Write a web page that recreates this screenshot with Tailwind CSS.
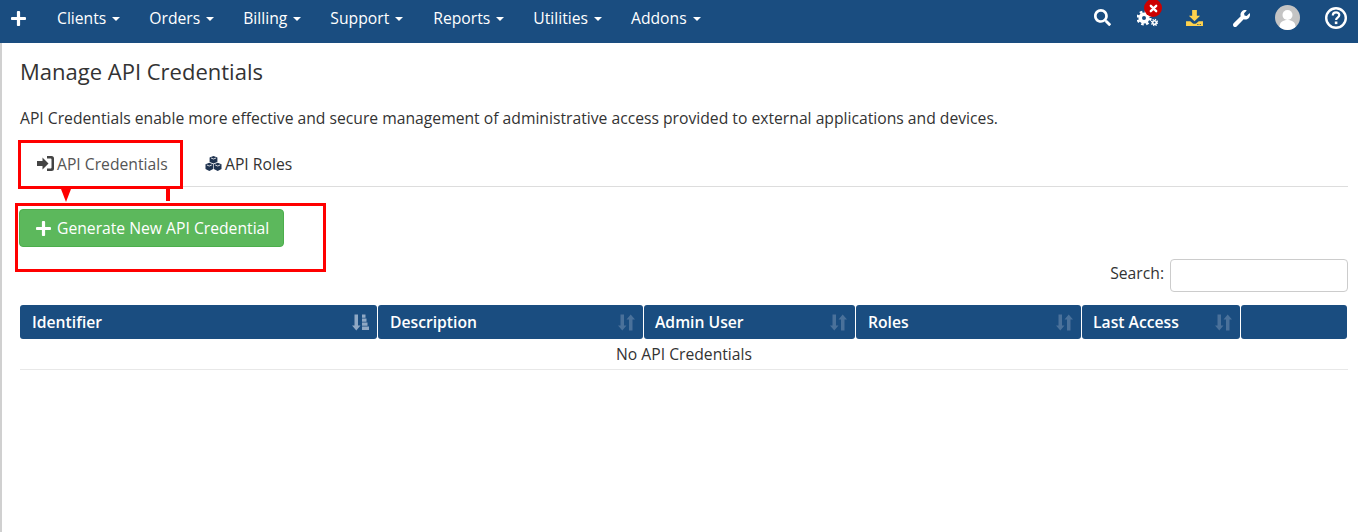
<!DOCTYPE html>
<html lang="en">
<head>
  <meta charset="UTF-8" />
  <title>Manage API Credentials</title>
  <script src="https://cdn.jsdelivr.net/npm/@tailwindcss/browser@4"></script>
</head>
<body class="bg-white font-['Open_Sans',sans-serif] text-[15.7px] leading-[24px] text-[#333] h-[532px] overflow-hidden relative">

  <!-- Top nav -->
  <nav class="h-[43px] bg-[#1a4d80] text-white flex items-center pl-[11px] pr-[11px] pb-[7px]">
    <svg class="w-[15px] h-[15px] mr-[31px] fill-white" viewBox="0 32 448 448"><path d="M416 208H272V64c0-17.67-14.33-32-32-32h-32c-17.67 0-32 14.33-32 32v144H32c-17.67 0-32 14.33-32 32v32c0 17.67 14.33 32 32 32h144v144c0 17.67 14.33 32 32 32h32c17.67 0 32-14.33 32-32V304h144c17.67 0 32-14.33 32-32v-32c0-17.67-14.33-32-32-32z"/></svg>
    <ul class="flex gap-[29px]">
      <li class="flex items-center gap-[6px]">Clients <span class="mt-[2px] border-x-[4px] border-x-transparent border-t-[4px] border-t-white"></span></li>
      <li class="flex items-center gap-[6px]">Orders <span class="mt-[2px] border-x-[4px] border-x-transparent border-t-[4px] border-t-white"></span></li>
      <li class="flex items-center gap-[6px]">Billing <span class="mt-[2px] border-x-[4px] border-x-transparent border-t-[4px] border-t-white"></span></li>
      <li class="flex items-center gap-[6px]">Support <span class="mt-[2px] border-x-[4px] border-x-transparent border-t-[4px] border-t-white"></span></li>
      <li class="flex items-center gap-[6px] ml-[1px]">Reports <span class="mt-[2px] border-x-[4px] border-x-transparent border-t-[4px] border-t-white"></span></li>
      <li class="flex items-center gap-[6px]">Utilities <span class="mt-[2px] border-x-[4px] border-x-transparent border-t-[4px] border-t-white"></span></li>
      <li class="flex items-center gap-[6px]">Addons <span class="mt-[2px] border-x-[4px] border-x-transparent border-t-[4px] border-t-white"></span></li>
    </ul>
    <div class="ml-auto flex items-center">
      <svg class="w-[17px] h-[17px] fill-white mr-[26px] -mt-[2px]" viewBox="0 0 512 512"><path d="M505 442.7L405.3 343c-4.5-4.5-10.6-7-17-7H372c27.6-35.3 44-79.7 44-128C416 93.1 322.9 0 208 0S0 93.1 0 208s93.1 208 208 208c48.3 0 92.7-16.4 128-44v16.3c0 6.4 2.5 12.5 7 17l99.7 99.7c9.4 9.4 24.6 9.4 33.9 0l28.3-28.3c9.4-9.4 9.4-24.6.1-34zM208 336c-70.7 0-128-57.2-128-128 0-70.7 57.2-128 128-128 70.7 0 128 57.2 128 128 0 70.7-57.2 128-128 128z"/></svg>
      <!-- cogs + alert badge -->
      <div class="relative w-[21px] h-[18px] mr-[28px]">
        <svg class="w-[21px] h-[18px]" viewBox="0 0 21 18">
          <circle cx="7" cy="9" r="3.800" fill="none" stroke="#fff" stroke-width="3.600"/>
          <circle cx="7" cy="9" r="6.400" fill="none" stroke="#fff" stroke-width="2.400" stroke-dasharray="2.600 2.426"/>
          <circle cx="17.500" cy="13.500" r="1.800" fill="none" stroke="#fff" stroke-width="1.600"/>
          <circle cx="17.500" cy="13.500" r="3.100" fill="none" stroke="#fff" stroke-width="1.200" stroke-dasharray="1.300 1.135"/>
        </svg>
        <span class="absolute -top-[10px] left-[7px] w-[18px] h-[18px] rounded-full bg-[#cc0000] flex items-center justify-center">
          <svg class="w-[9px] h-[9px]" viewBox="0 0 10 10"><path d="M2 2l6 6M8 2l-6 6" stroke="#fff" stroke-width="2.600" stroke-linecap="round"/></svg>
        </span>
      </div>
      <svg class="w-[17px] h-[16px] mr-[30px]" viewBox="0 0 18 17"><path d="M6.500 0h5v6h3.500L9 12 3 6h3.500z" fill="#ffd24d"/><path d="M0 12h4.500L7 14c1 .8 3 .8 4 0l2.500-2H18v5H0z" fill="#ffd24d"/><path d="M12 15h1.200v1H12zM14.500 15h1.200v1h-1.200z" fill="#1a4d80"/></svg>
      <svg class="w-[17px] h-[17px] fill-white mr-[25px]" viewBox="0 0 512 512"><path d="M507.730 109.100c-2.240-9.030-13.540-12.090-20.120-5.510l-74.360 74.360-67.880-11.310-11.310-67.880 74.360-74.360c6.620-6.620 3.430-17.900-5.660-20.160-47.380-11.740-99.550.91-136.580 37.930-39.640 39.640-50.550 97.100-34.050 147.200L18.740 402.760c-24.990 24.990-24.990 65.510 0 90.500 24.990 24.990 65.510 24.990 90.500 0l213.210-213.210c50.120 16.710 107.470 5.680 147.370-34.220 37.070-37.070 49.700-89.320 37.910-136.730z"/></svg>
      <svg class="w-[25px] h-[25px] mr-[25px] -mt-[2px]" viewBox="0 0 25 25"><circle cx="12.500" cy="12.500" r="12.500" fill="#c4c4c4"/><circle cx="12.500" cy="10" r="5" fill="#fff"/><path d="M4.500 22c0-5 3.500-7 8-7s8 2 8 7c-2 1.800-5 3-8 3s-6-1.200-8-3z" fill="#fff"/></svg>
      <svg class="w-[22px] h-[22px]" viewBox="0 0 22 22" fill="none" stroke="#fff"><circle cx="11" cy="11" r="9.800" stroke-width="2.400"/><path d="M7.800 8.500c0-2 1.400-3.200 3.300-3.200s3.200 1.100 3.200 2.800c0 2.400-3.200 2.500-3.200 4.800" stroke-width="2.200"/><path d="M11.100 14.500v2.600" stroke-width="2.600"/></svg>
    </div>
  </nav>

  <main class="border-l-2 border-l-[#d0d0d0] h-[489px] pl-[18px] pr-[10px]">
    <h1 class="text-[22px] leading-[26px] pt-[15px] text-[#333]">Manage API Credentials</h1>
    <p class="mt-[22px]">API Credentials enable more effective and secure management of administrative access provided to external applications and devices.</p>

    <!-- Tabs -->
    <div class="mt-[10px] h-[47px] border-b border-[#ddd] flex">
      <div class="w-[163px] h-[47px] bg-white border border-[#ddd] border-b-white rounded-t flex items-center pl-[16px] text-[#555]">
        <svg class="w-[17px] h-[15px] mr-[3px]" viewBox="0 0 17 15" fill="#444"><path d="M0 5h5.500V1.500L11.500 7.500 5.500 13.500V10H0z"/><path d="M10 0h4.500A2.500 2.500 0 0 1 17 2.500v10a2.500 2.500 0 0 1-2.500 2.500H10v-2.500h3.500c.6 0 1-.4 1-1v-8c0-.6-.4-1-1-1H10z"/></svg>
        API Credentials
      </div>
      <div class="flex items-center pl-[22px] pt-[1px] text-[#333]">
        <svg class="w-[17px] h-[15px] mr-[3px]" viewBox="0 0 17 15" fill="#1f3350"><path d="M8.500 0l3.900 1.500v4.500L8.500 7.600 4.600 6V1.500z"/><path d="M4.300 6.800l3.900 1.500V13l-3.900 2-3.800-2V8.300z"/><path d="M12.700 6.800l3.800 1.500V13l-3.800 2-3.900-2V8.300z"/><path d="M6 2l2.500 1L11 2" stroke="#fff" stroke-width=".8" fill="none"/><path d="M1.800 9l2.500 1 2.500-1M10.200 9l2.500 1 2.500-1" stroke="#fff" stroke-width=".8" fill="none"/></svg>
        API Roles
      </div>
    </div>

    <button class="mt-[22px] -ml-[1px] h-[38px] w-[265px] bg-[#5cb85c] border border-[#4cae4c] rounded text-[#fff] flex items-center pl-[16px]">
      <svg class="w-[15px] h-[15px] mr-[6px] fill-white" viewBox="0 32 448 448"><path d="M416 208H272V64c0-17.67-14.33-32-32-32h-32c-17.67 0-32 14.33-32 32v144H32c-17.67 0-32 14.33-32 32v32c0 17.67 14.33 32 32 32h144v144c0 17.67 14.33 32 32 32h32c17.67 0 32-14.33 32-32V304h144c17.67 0 32-14.33 32-32v-32c0-17.67-14.33-32-32-32z"/></svg>
      Generate New API Credential
    </button>

    <div class="mt-[12px] flex justify-end items-center gap-[6px]">
      <label class="-mt-[6px]">Search:</label>
      <input type="text" class="w-[178px] h-[33px] border border-[#ccc] rounded bg-white" />
    </div>

    <!-- Table -->
    <div class="mt-[13px] w-[1328px]">
      <div class="flex gap-[1px] h-[34px] text-white font-semibold">
        <div class="w-[357px] bg-[#1a4d80] rounded-[3px] flex items-center justify-between pl-[12px] pr-[8px]">Identifier
          <svg class="w-[17px] h-[17px]" viewBox="0 0 17 16" fill="#8fa8c4"><path d="M2.500 0h3.500v11h2.500l-4.200 5L0 11h2.500z"/><path d="M10 0h3.500v3.200H10zM10 4h4.500v3.200H10zM10 8h5.500v3.200H10zM10 12h7v3.500h-7z"/></svg>
        </div>
        <div class="w-[265px] bg-[#1a4d80] rounded-[3px] flex items-center justify-between pl-[12px] pr-[8px]">Description
          <svg class="w-[17px] h-[17px]" viewBox="0 0 17 16" fill="#4a719a"><path d="M2.500 0h3.500v11h2.500l-4.200 5L0 11h2.500z"/><path d="M11 16h3.500V5H17l-4.300-5-4.200 5H11z"/></svg>
        </div>
        <div class="w-[211px] bg-[#1a4d80] rounded-[3px] flex items-center justify-between pl-[11px] pr-[8px]">Admin User
          <svg class="w-[17px] h-[17px]" viewBox="0 0 17 16" fill="#4a719a"><path d="M2.500 0h3.500v11h2.500l-4.200 5L0 11h2.500z"/><path d="M11 16h3.500V5H17l-4.300-5-4.200 5H11z"/></svg>
        </div>
        <div class="w-[225px] bg-[#1a4d80] rounded-[3px] flex items-center justify-between pl-[12px] pr-[8px]">Roles
          <svg class="w-[17px] h-[17px]" viewBox="0 0 17 16" fill="#4a719a"><path d="M2.500 0h3.500v11h2.500l-4.200 5L0 11h2.500z"/><path d="M11 16h3.500V5H17l-4.300-5-4.200 5H11z"/></svg>
        </div>
        <div class="w-[158px] bg-[#1a4d80] rounded-[3px] flex items-center justify-between pl-[11px] pr-[8px]">Last Access
          <svg class="w-[17px] h-[17px]" viewBox="0 0 17 16" fill="#4a719a"><path d="M2.500 0h3.500v11h2.500l-4.200 5L0 11h2.500z"/><path d="M11 16h3.500V5H17l-4.300-5-4.200 5H11z"/></svg>
        </div>
        <div class="w-[106px] bg-[#1a4d80] rounded-[3px]"></div>
      </div>
      <div class="h-[31px] border-b border-[#e8e8e8] flex items-center justify-center">No API Credentials</div>
    </div>
  </main>

  <!-- Red annotations drawn over the page -->
  <div class="absolute left-[18px] top-[140px] w-[165px] h-[49px] border-[3px] border-[#f00]"></div>
  <div class="absolute left-[61px] top-[189px] border-x-[5px] border-x-transparent border-t-[13px] border-t-[#f00]"></div>
  <div class="absolute left-[166px] top-[189px] w-[4px] h-[12px] bg-[#f00]"></div>
  <div class="absolute left-[15px] top-[203px] w-[311px] h-[69px] border-[3px] border-[#f00]"></div>
</body>
</html>
